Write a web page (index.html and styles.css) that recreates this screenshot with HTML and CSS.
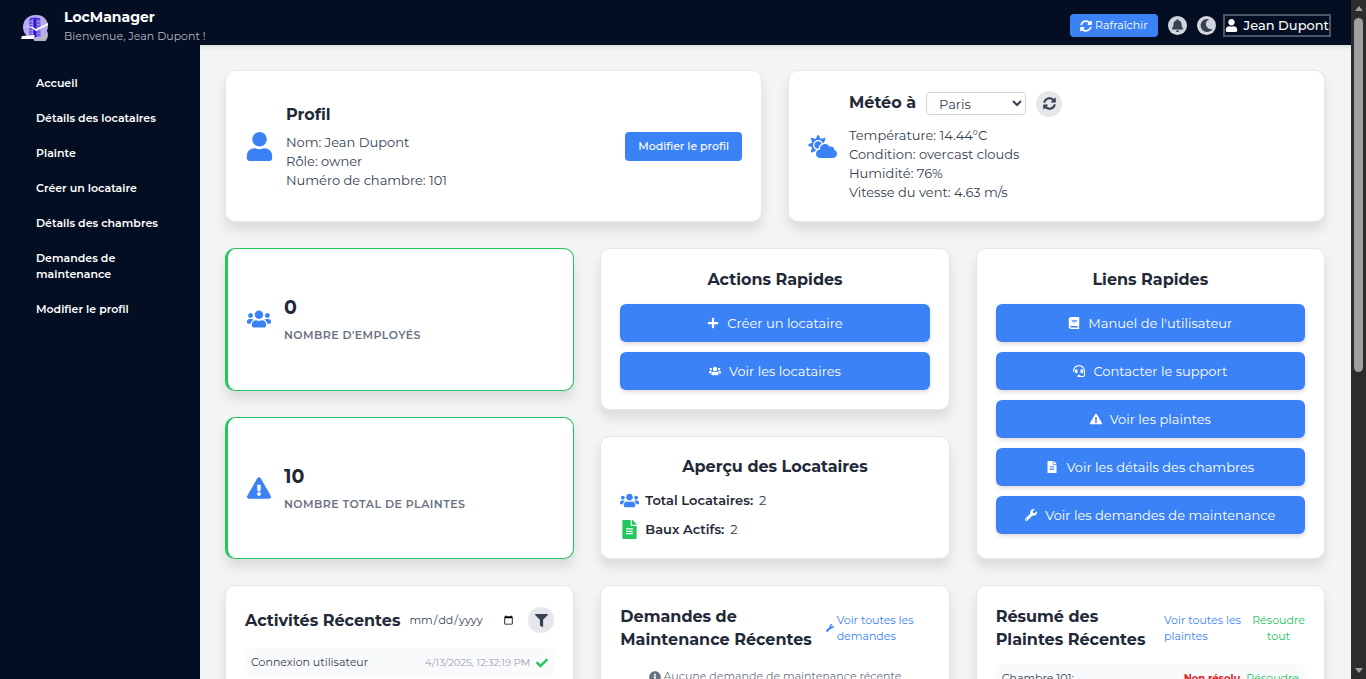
FILE: index.html
```html
<!DOCTYPE html>
<html lang="fr">
<head>
<meta charset="utf-8">
<title>LocManager</title>
<link rel="stylesheet" href="styles.css">
</head>
<body>
<svg class="sprite" aria-hidden="true">
  <symbol id="user" viewBox="0 0 448 512"><path d="M224 256c70.7 0 128-57.3 128-128S294.7 0 224 0 96 57.3 96 128s57.3 128 128 128zm89.6 32h-16.7c-22.2 10.2-46.9 16-72.9 16s-50.6-5.8-72.9-16h-16.7C60.2 288 0 348.2 0 422.4V464c0 26.5 21.5 48 48 48h352c26.5 0 48-21.5 48-48v-41.6c0-74.2-60.2-134.4-134.4-134.4z"/></symbol>
  <symbol id="users" viewBox="0 0 640 512"><path d="M96 224c35.3 0 64-28.7 64-64s-28.7-64-64-64-64 28.7-64 64 28.7 64 64 64zm448 0c35.3 0 64-28.7 64-64s-28.7-64-64-64-64 28.7-64 64 28.7 64 64 64zm32 32h-64c-17.6 0-33.5 7.1-45.1 18.6 40.3 22.1 68.9 62 75.1 109.4h66c17.7 0 32-14.3 32-32v-32c0-35.3-28.7-64-64-64zm-256 0c61.9 0 112-50.1 112-112S381.9 32 320 32 208 82.1 208 144s50.1 112 112 112zm76.8 32h-8.3c-20.8 10-43.9 16-68.5 16s-47.6-6-68.5-16h-8.3C179.6 288 128 339.6 128 403.2V432c0 26.5 21.5 48 48 48h288c26.5 0 48-21.5 48-48v-28.8c0-63.6-51.6-115.2-115.2-115.2zm-223.7-13.4C161.5 263.1 145.6 256 128 256H64c-35.3 0-64 28.7-64 64v32c0 17.7 14.3 32 32 32h65.9c6.3-47.4 34.9-87.3 75.2-109.4z"/></symbol>
  <symbol id="warning" viewBox="0 0 576 512"><path d="M569.517 440.013C587.975 472.007 564.806 512 527.94 512H48.054c-36.937 0-59.999-40.055-41.577-71.987L246.423 23.985c18.467-32.009 64.72-31.951 83.154 0l239.94 416.028zM288 354c-25.405 0-46 20.595-46 46s20.595 46 46 46 46-20.595 46-46-20.595-46-46-46zm-43.673-165.346l7.418 136c.347 6.364 5.609 11.346 11.982 11.346h48.546c6.373 0 11.635-4.982 11.982-11.346l7.418-136c.375-6.874-5.098-12.654-11.982-12.654h-63.383c-6.884 0-12.356 5.78-11.981 12.654z"/></symbol>
  <symbol id="plus" viewBox="0 0 448 512"><path d="M416 208H272V64c0-17.67-14.33-32-32-32h-32c-17.67 0-32 14.33-32 32v144H32c-17.67 0-32 14.33-32 32v32c0 17.67 14.33 32 32 32h144v144c0 17.67 14.33 32 32 32h32c17.67 0 32-14.33 32-32V304h144c17.67 0 32-14.33 32-32v-32c0-17.67-14.33-32-32-32z"/></symbol>
  <symbol id="book" viewBox="0 0 448 512"><path d="M448 360V24c0-13.3-10.7-24-24-24H96C43 0 0 43 0 96v320c0 53 43 96 96 96h328c13.3 0 24-10.7 24-24v-16c0-7.5-3.5-14.3-8.9-18.7-4.2-15.4-4.2-59.3 0-74.7 5.4-4.3 8.9-11.1 8.9-18.6zM128 134c0-3.3 2.7-6 6-6h212c3.3 0 6 2.7 6 6v20c0 3.3-2.7 6-6 6H134c-3.3 0-6-2.7-6-6v-20zm0 64c0-3.3 2.7-6 6-6h212c3.3 0 6 2.7 6 6v20c0 3.3-2.7 6-6 6H134c-3.3 0-6-2.7-6-6v-20zm253.4 250H96c-17.7 0-32-14.3-32-32 0-17.6 14.4-32 32-32h285.4c-1.9 17.1-1.9 46.9 0 64z"/></symbol>
  <symbol id="bell" viewBox="0 0 448 512"><path d="M224 512c35.32 0 63.97-28.65 63.97-64H160.03c0 35.35 28.65 64 63.97 64zm215.39-149.71c-19.32-20.76-55.47-51.99-55.47-154.29 0-77.7-54.48-139.9-127.94-155.16V32c0-17.67-14.32-32-31.98-32s-31.98 14.33-31.98 32v20.84C118.56 68.1 64.08 130.3 64.08 208c0 102.3-36.15 133.53-55.47 154.29-6 6.45-8.66 14.16-8.61 21.71.11 16.4 12.98 32 32.1 32h383.8c19.12 0 32-15.6 32.1-32 .05-7.55-2.61-15.27-8.61-21.71z"/></symbol>
  <symbol id="moon" viewBox="0 0 512 512"><path d="M283.211 512c78.962 0 151.079-35.925 198.857-94.792 7.068-8.708-.639-21.43-11.562-19.35-124.203 23.654-238.262-71.576-238.262-196.954 0-72.222 38.662-138.635 101.498-174.394 9.686-5.512 7.25-20.197-3.756-22.23A258.156 258.156 0 0 0 283.211 0c-141.309 0-256 114.511-256 256 0 141.309 114.511 256 256 256z"/></symbol>
  <symbol id="sync" viewBox="0 0 512 512"><path d="M370.72 133.28C339.458 104.008 298.888 87.962 255.848 88c-77.458.068-144.328 53.178-162.791 126.85-1.344 5.363-6.122 9.15-11.651 9.15H24.103c-7.498 0-13.194-6.807-11.807-14.176C33.933 94.924 134.813 8 256 8c66.448 0 126.791 26.136 171.315 68.685L463.03 40.97C478.149 25.851 504 36.559 504 57.941V192c0 13.255-10.745 24-24 24H345.941c-21.382 0-32.09-25.851-16.971-40.971l41.75-41.749zM32 296h134.059c21.382 0 32.09 25.851 16.971 40.971l-41.75 41.75c31.262 29.273 71.835 45.319 114.876 45.28 77.418-.07 144.315-53.144 162.787-126.849 1.344-5.363 6.122-9.15 11.651-9.15h57.304c7.498 0 13.194 6.807 11.807 14.176C478.067 417.076 377.187 504 256 504c-66.448 0-126.791-26.136-171.315-68.685L48.97 471.03C33.851 486.149 8 475.441 8 454.059V320c0-13.255 10.745-24 24-24z"/></symbol>
  <symbol id="cloud-sun" viewBox="0 0 640 512"><path d="M575.2 325.7c.2-1.9.8-3.7.8-5.6 0-35.3-28.7-64-64-64-12.6 0-24.2 3.8-34.1 10-17.6-38.8-56.5-66-101.9-66-61.8 0-112 50.1-112 112 0 3 .7 5.8.9 8.7-49.6 3.7-88.9 44.7-88.9 95.3 0 53 43 96 96 96h272c53 0 96-43 96-96 0-42.1-27.2-77.4-64.8-90.4zm-430.4-22.6c-43.7-43.7-43.7-114.7 0-158.3 43.7-43.7 114.7-43.7 158.4 0 9.7 9.7 16.9 20.9 22.3 32.7 9.8-3.7 20.1-6 30.7-7.5L386 81.1c4-11.9-7.3-23.1-19.2-19.2L279 91.2 237.5 8.4C232-2.8 216-2.8 210.4 8.4L169 91.2 81.1 61.9C69.3 58 58 69.3 61.9 81.1l29.3 87.8-82.8 41.5c-11.2 5.6-11.2 21.5 0 27.1l82.8 41.4-29.3 87.8c-4 11.9 7.3 23.1 19.2 19.2l76.1-25.3c6.1-12.4 14-23.7 23.6-33.5-13.1-5.4-25.4-13.4-36-24zm-4.8-79.2c0 40.8 29.3 74.8 67.9 82.3 8-4.7 16.3-8.8 25.2-11.7 5.4-44.3 31-82.5 67.4-105C287.3 160.4 258 140 224 140c-46.3 0-84 37.6-84 83.9z"/></symbol>
  <symbol id="filter" viewBox="0 0 512 512"><path d="M487.976 0H24.028C2.71 0-8.047 25.866 7.058 40.971L192 225.941V432c0 7.831 3.821 15.17 10.237 19.662l80 55.98C298.02 518.69 320 507.493 320 487.98V225.941l184.947-184.97C520.021 25.896 509.338 0 487.976 0z"/></symbol>
  <symbol id="check" viewBox="0 0 512 512"><path d="M173.898 439.404l-166.4-166.4c-9.997-9.997-9.997-26.206 0-36.204l36.203-36.204c9.997-9.998 26.207-9.998 36.204 0L192 312.69 432.095 72.596c9.997-9.997 26.207-9.997 36.204 0l36.203 36.204c9.997 9.997 9.997 26.206 0 36.204l-294.4 294.401c-9.998 9.997-26.207 9.997-36.204-.001z"/></symbol>
  <symbol id="file" viewBox="0 0 384 512"><path d="M224 136V0H24C10.7 0 0 10.7 0 24v464c0 13.3 10.7 24 24 24h336c13.3 0 24-10.7 24-24V160H248c-13.2 0-24-10.8-24-24zm64 236c0 6.6-5.4 12-12 12H108c-6.6 0-12-5.4-12-12v-8c0-6.6 5.4-12 12-12h168c6.6 0 12 5.4 12 12v8zm0-64c0 6.6-5.4 12-12 12H108c-6.6 0-12-5.4-12-12v-8c0-6.6 5.4-12 12-12h168c6.6 0 12 5.4 12 12v8zm0-72v8c0 6.6-5.4 12-12 12H108c-6.6 0-12-5.4-12-12v-8c0-6.6 5.4-12 12-12h168c6.6 0 12 5.4 12 12zm96-114.1v6.1H256V0h6.1c6.4 0 12.5 2.5 17 7l97.9 98c4.5 4.5 7 10.6 7 16.9z"/></symbol>
  <symbol id="wrench" viewBox="0 0 512 512"><path d="M507.73 109.1c-2.24-9.03-13.54-12.09-20.12-5.51l-74.36 74.36-67.88-11.31-11.31-67.88 74.36-74.36c6.62-6.62 3.43-17.9-5.66-20.16-47.38-11.74-99.55.91-136.58 37.93-39.64 39.64-50.55 97.1-34.05 147.2L18.74 402.76c-24.99 24.99-24.99 65.51 0 90.5 24.99 24.99 65.51 24.99 90.5 0l213.21-213.21c50.12 16.71 107.47 5.68 147.37-34.22 37.07-37.07 49.7-89.32 37.91-136.73zM64 472c-13.25 0-24-10.75-24-24 0-13.26 10.75-24 24-24s24 10.74 24 24c0 13.25-10.75 24-24 24z"/></symbol>
  <symbol id="headset" viewBox="0 0 512 512"><path d="M192 208c0-17.67-14.33-32-32-32h-16c-35.35 0-64 28.65-64 64v48c0 35.35 28.65 64 64 64h16c17.67 0 32-14.33 32-32V208zm176 144c35.35 0 64-28.65 64-64v-48c0-35.35-28.65-64-64-64h-16c-17.67 0-32 14.33-32 32v112c0 17.67 14.33 32 32 32h16zM256 0C113.18 0 4.58 118.83 0 256v16c0 8.84 7.16 16 16 16h16c8.84 0 16-7.16 16-16v-16c0-114.69 93.31-208 208-208s208 93.31 208 208h-.12c.08 2.43.12 165.72.12 165.72 0 23.35-18.93 42.28-42.28 42.28H320c0-26.51-21.49-48-48-48h-32c-26.51 0-48 21.49-48 48s21.49 48 48 48h181.72c49.86 0 90.28-40.42 90.28-90.28V256C507.42 118.83 398.82 0 256 0z"/></symbol>
  <symbol id="info" viewBox="0 0 512 512"><path d="M256 8C119.043 8 8 119.083 8 256c0 136.997 111.043 248 248 248s248-111.003 248-248C504 119.083 392.957 8 256 8zm0 110c23.196 0 42 18.804 42 42s-18.804 42-42 42-42-18.804-42-42 18.804-42 42-42zm56 254c0 6.627-5.373 12-12 12h-88c-6.627 0-12-5.373-12-12v-24c0-6.627 5.373-12 12-12h12v-64h-12c-6.627 0-12-5.373-12-12v-24c0-6.627 5.373-12 12-12h64c6.627 0 12 5.373 12 12v100h12c6.627 0 12 5.373 12 12v24z"/></symbol>
</svg>
<div class="window">
  <div class="app">
    <header class="topbar">
      <svg class="logo" viewBox="0 0 28 32" aria-hidden="true">
        <circle cx="19" cy="26" r="8" fill="#b4b8c2"/>
        <circle cx="16" cy="17" r="11" fill="#a9acb8"/>
        <circle cx="14" cy="18" r="12" fill="#b8a8f8"/>
        <path d="M8 10l6-2 6 2v18H8z" fill="#9a86ee"/>
        <path d="M8 11h12M8 14h12M8 17h12M8 20h12M8 23h12M8 26h12" stroke="#4a35b0" stroke-width="1" stroke-dasharray="3 1"/>
        <path d="M9 10l5-1 5 1" stroke="#3012d6" stroke-width="1" fill="none"/>
        <path d="M14 10v18" stroke="#3012d6" stroke-width="3"/>
        <path d="M3 17l9 1 3 2 12-6v2l-12 6-4-3zM1 27l13-1-2 4H0z" fill="#fff"/>
      </svg>
      <div class="brand">
        <h1 class="brand-name">LocManager</h1>
        <p class="welcome">Bienvenue, Jean Dupont !</p>
      </div>
      <div class="tools">
        <div class="quick">
          <button class="refresh"><svg class="ic12"><use href="#sync"/></svg>Rafraîchir</button>
          <button class="round dim" aria-label="Notifications"><svg class="ic13"><use href="#bell"/></svg></button>
          <button class="round dim" aria-label="Mode sombre"><svg class="ic13"><use href="#moon"/></svg></button>
        </div>
        <button class="account"><svg class="ic13"><use href="#user"/></svg>Jean Dupont</button>
      </div>
    </header>
    <div class="body">
      <nav class="sidebar">
        <a href="#">Accueil</a>
        <a href="#">Détails des locataires</a>
        <a href="#">Plainte</a>
        <a href="#">Créer un locataire</a>
        <a href="#">Détails des chambres</a>
        <a href="#">Demandes de maintenance</a>
        <a href="#">Modifier le profil</a>
      </nav>
      <main class="main">
        <div class="halves">
          <section class="card summary">
            <svg class="ic29 blue"><use href="#user"/></svg>
            <div class="facts">
              <h2>Profil</h2>
              <p>Nom: Jean Dupont</p>
              <p>Rôle: owner</p>
              <p>Numéro de chambre: 101</p>
            </div>
            <button class="edit">Modifier le profil</button>
          </section>
          <section class="card summary">
            <svg class="ic29 blue"><use href="#cloud-sun"/></svg>
            <div class="facts">
              <div class="weather-head">
                <h2><label for="city">Météo à</label></h2>
                <select id="city"><option>Paris</option></select>
                <button class="round" aria-label="Actualiser"><svg class="ic13"><use href="#sync"/></svg></button>
              </div>
              <p>Température: 14.44°C</p>
              <p>Condition: overcast clouds</p>
              <p>Humidité: 76%</p>
              <p>Vitesse du vent: 4.63 m/s</p>
            </div>
          </section>
        </div>
        <div class="thirds">
          <div class="stack">
            <section class="card stat">
              <svg class="ic24 blue"><use href="#users"/></svg>
              <div><p class="value">0</p><p class="caption">Nombre d'employés</p></div>
            </section>
            <section class="card stat">
              <svg class="ic24 blue"><use href="#warning"/></svg>
              <div><p class="value">10</p><p class="caption">Nombre total de plaintes</p></div>
            </section>
          </div>
          <div class="stack">
            <section class="card panel">
              <h2>Actions Rapides</h2>
              <a class="action" href="#"><svg class="ic12"><use href="#plus"/></svg>Créer un locataire</a>
              <a class="action" href="#"><svg class="ic12"><use href="#users"/></svg>Voir les locataires</a>
            </section>
            <section class="card panel grow">
              <h2>Aperçu des Locataires</h2>
              <ul class="overview">
                <li><svg class="ic19 blue"><use href="#users"/></svg><b>Total Locataires:</b>2</li>
                <li><svg class="ic19 green"><use href="#file"/></svg><b>Baux Actifs:</b>2</li>
              </ul>
            </section>
          </div>
          <section class="card panel links">
            <h2>Liens Rapides</h2>
            <a class="action" href="#"><svg class="ic12"><use href="#book"/></svg>Manuel de l'utilisateur</a>
            <a class="action" href="#"><svg class="ic12"><use href="#headset"/></svg>Contacter le support</a>
            <a class="action" href="#"><svg class="ic12"><use href="#warning"/></svg>Voir les plaintes</a>
            <a class="action" href="#"><svg class="ic12"><use href="#file"/></svg>Voir les détails des chambres</a>
            <a class="action" href="#"><svg class="ic12"><use href="#wrench"/></svg>Voir les demandes de maintenance</a>
          </section>
        </div>
        <div class="thirds">
          <section class="card recent">
            <div class="recent-head">
              <h2>Activités Récentes</h2>
              <input type="date" aria-label="Date">
              <button class="round" aria-label="Filtrer"><svg class="ic13"><use href="#filter"/></svg></button>
            </div>
            <div class="entry"><span>Connexion utilisateur</span><time>4/13/2025, 12:32:19 PM</time><svg class="ic12 green"><use href="#check"/></svg></div>
          </section>
          <section class="card recent">
            <div class="recent-head">
              <h2>Demandes de Maintenance Récentes</h2>
              <a class="more requests blue" href="#"><svg class="ic8"><use href="#wrench"/></svg><span>Voir toutes les demandes</span></a>
            </div>
            <p class="empty"><svg class="ic12"><use href="#info"/></svg>Aucune demande de maintenance récente</p>
          </section>
          <section class="card recent">
            <div class="recent-head">
              <h2>Résumé des Plaintes Récentes</h2>
              <a class="more complaints blue" href="#">Voir toutes les plaintes</a>
              <button class="more resolve">Résoudre tout</button>
            </div>
            <div class="entry"><span>Chambre 101:</span><strong>Non résolu</strong><button class="resolve">Résoudre</button></div>
          </section>
        </div>
      </main>
    </div>
  </div>
  <div class="scrollbar" aria-hidden="true"><i class="up"></i><i class="thumb"></i><i class="down"></i></div>
</div>
</body>
</html>
```
FILE: styles.css
```css
* { box-sizing: border-box; margin: 0; padding: 0; }
body { font-family: Montserrat, Inter, "Open Sans", sans-serif; font-size: 13px; line-height: 19px; color: #374151; }
button, input, select { font: inherit; color: inherit; border: 0; background: none; }
a { text-decoration: none; }
svg { flex: none; fill: currentColor; }
.sprite { position: absolute; width: 0; height: 0; }
.ic8 { width: 8px; height: 8px; }
.ic12 { width: 12px; height: 12px; }
.ic13 { width: 13px; height: 13px; }
.ic19 { width: 19px; height: 19px; }
.ic24 { width: 24px; height: 24px; }
.ic29 { width: 29px; height: 29px; }
.blue { color: #3b82f6; }
.green { color: #22c55e; }

.window { display: flex; height: 100vh; overflow: hidden; }
.app { flex: 1; min-width: 0; display: flex; flex-direction: column; }
.topbar { position: relative; z-index: 1; display: flex; align-items: center; height: 45px; flex: none; padding: 0 20px 0 21px; background: #030e22; color: #fff; }
.logo { width: 28px; height: 32px; margin: 4px 15px 0 0; }
.brand { padding-top: 7px; }
.brand-name { font-size: 14px; line-height: 20px; font-weight: 700; }
.welcome { font-size: 11px; line-height: 19px; color: #b4b8c0; }
.tools { margin-left: auto; display: flex; align-items: center; gap: 7px; padding-top: 6px; }
.quick { display: flex; align-items: center; gap: 10px; }
.refresh { display: flex; align-items: center; gap: 3px; height: 23px; padding: 0 10px; border-radius: 4px; background: #3b82f6; font-size: 11px; }
.round { display: flex; align-items: center; justify-content: center; width: 26px; height: 26px; flex: none; border-radius: 50%; background: #e5e7eb; color: #374151; }
.dim { width: 19px; height: 19px; background: #d1d5db; }
.account { display: flex; align-items: center; gap: 6px; height: 23px; border: 2px solid #4b5563; font-size: 13px; font-weight: 500; }

.body { flex: 1; min-height: 0; display: flex; }
.sidebar { width: 200px; flex: none; padding: 21px 36px; background: #030e22; display: flex; flex-direction: column; }
.sidebar a { padding: 9px 0 10px; color: #fff; font-size: 11px; line-height: 16px; font-weight: 600; }
.main { flex: 1; min-width: 0; padding: 25px 26px 25px 25px; background: #f3f4f6; display: flex; flex-direction: column; gap: 26px; overflow: hidden; box-shadow: inset 0 5px 5px -4px rgba(0, 0, 0, .15); }
.halves, .thirds { display: grid; gap: 26px; flex: none; }
.halves { grid-template-columns: 1fr 1fr; }
.thirds { grid-template-columns: repeat(3, minmax(0, 1fr)); }
.stack { display: flex; flex-direction: column; gap: 26px; }
.card { background: #fff; border: 1px solid #e5e7eb; border-radius: 10px; box-shadow: 0 8px 12px rgba(0, 0, 0, .1); }
h2 { font-size: 16px; line-height: 23px; font-weight: 700; color: #1f2937; }

.summary { display: flex; align-items: center; min-height: 152px; padding: 18px 19px; }
.facts { margin-left: 12px; }
.facts > h2 { margin-bottom: 7px; }
.weather-head { display: flex; align-items: center; gap: 10px; margin-bottom: 9px; }
.weather-head h2 { padding-bottom: 3px; }
select { width: 100px; height: 23px; padding: 0 8px; border: 1px solid #d1d5db; border-radius: 4px; background: #fff; }
.edit { margin-left: auto; height: 29px; padding: 0 13px; border-radius: 4px; background: #3b82f6; color: #fff; font-size: 11px; font-weight: 500; }

.stat { flex: 1; display: flex; align-items: center; gap: 13px; padding: 0 19px; border-color: #22c55e; border-left-width: 3px; }
.value { font-size: 19px; line-height: 26px; font-weight: 700; color: #1f2937; }
.caption { margin-top: 6px; font-size: 11px; line-height: 16px; font-weight: 600; letter-spacing: 0.04em; text-transform: uppercase; color: #6b7280; }

.panel { padding: 19px; display: flex; flex-direction: column; gap: 10px; }
.panel h2 { text-align: center; margin-bottom: 3px; }
.grow { flex: 1; padding-top: 18px; }
.action { display: flex; align-items: center; justify-content: center; gap: 8px; height: 38px; border-radius: 6px; background: #3b82f6; color: #fff; box-shadow: 0 2px 4px rgba(0, 0, 0, .15); }
.links { padding-bottom: 23px; }
.overview { list-style: none; display: flex; flex-direction: column; gap: 10px; }
.overview li { display: flex; align-items: center; gap: 6px; }
.overview b { font-weight: 600; color: #1f2937; }

.recent { padding: 19px; min-height: 160px; }
.recent-head { display: flex; align-items: center; gap: 8px; min-height: 30px; margin-bottom: 13px; }
.recent-head h2 { flex: 0 1 auto; }
input[type="date"] { flex: none; width: 108px; font-size: 11px; margin-right: auto; }
.entry { display: flex; align-items: center; gap: 6px; padding: 5px 6px; border-radius: 6px; background: #f9fafb; font-size: 11px; }
.entry span { flex: 1; }
time { font-size: 10px; color: #9ca3af; }
.more { flex: none; font-size: 11px; line-height: 16px; }
.requests { display: flex; align-items: center; gap: 3px; width: 104px; }
.complaints { width: 80px; }
.more.resolve { width: 53px; }
.resolve { color: #22c55e; }
.entry strong { font-size: 10px; font-weight: 700; color: #dc2626; }
.empty { display: flex; align-items: center; justify-content: center; gap: 3px; padding-top: 3px; font-size: 11px; color: #6b7280; }

.scrollbar { width: 15px; flex: none; display: flex; flex-direction: column; align-items: center; padding: 6px 0; background: #2c2c2c; }
.thumb { width: 9px; height: 354px; margin-top: 7px; border-radius: 5px; background: #9f9f9f; }
.up, .down { border: 4px solid transparent; border-top-width: 0; border-bottom: 5px solid #9f9f9f; }
.down { margin-top: auto; transform: rotate(180deg); }
```
